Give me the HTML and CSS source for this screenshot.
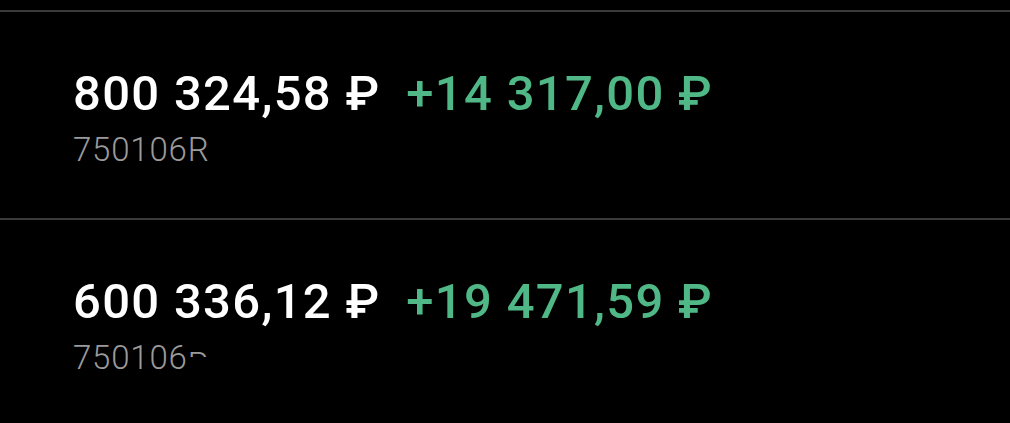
FILE: index.html
```html
<!DOCTYPE html>
<html lang="ru">
<head>
<meta charset="UTF-8">
<meta name="viewport" content="width=device-width, initial-scale=1.0">
<title>Счета</title>
<link rel="stylesheet" href="styles.css">
</head>
<body>

<div class="list">
    <!-- Account row -->
    <div class="account">
        <div class="amounts">
            <span class="balance">800 324,58 ₽</span>
            <span class="profit">+14 317,00 ₽</span>
        </div>
        <div class="number">750106R</div>
    </div>

    <div class="account">
        <div class="amounts">
            <span class="balance">600 336,12 ₽</span>
            <span class="profit">+19 471,59 ₽</span>
        </div>
        <div class="number">750106<span class="cut">R</span></div>
    </div>
</div>

</body>
</html>
```

FILE: styles.css
```css
body {
    margin: 0;
    padding: 0;
    background-color: #000;
    font-family: Roboto, 'Noto Sans', sans-serif;
    overflow: hidden;
}

.list {
    padding-top: 10px;
}

.account {
    border-top: 2px solid #3a3a3a;
    padding: 54px 0 49px 73px;
}

.amounts {
    display: flex;
    gap: 26px;
    font-size: 49px;
    line-height: 56px;
    font-weight: 500;
    letter-spacing: 1.3px;
}

.balance {
    color: #fff;
}

.profit {
    color: #4fb886;
}

.number {
    margin-top: 8px;
    font-size: 33px;
    line-height: 39px;
    font-weight: 300;
    letter-spacing: 0.8px;
    color: #9a9a9a;
}

.number .cut {
    display: inline-block;
    height: 12px;
    overflow: hidden;
    vertical-align: top;
    margin-top: 7px;
    line-height: 39px;
}
```
